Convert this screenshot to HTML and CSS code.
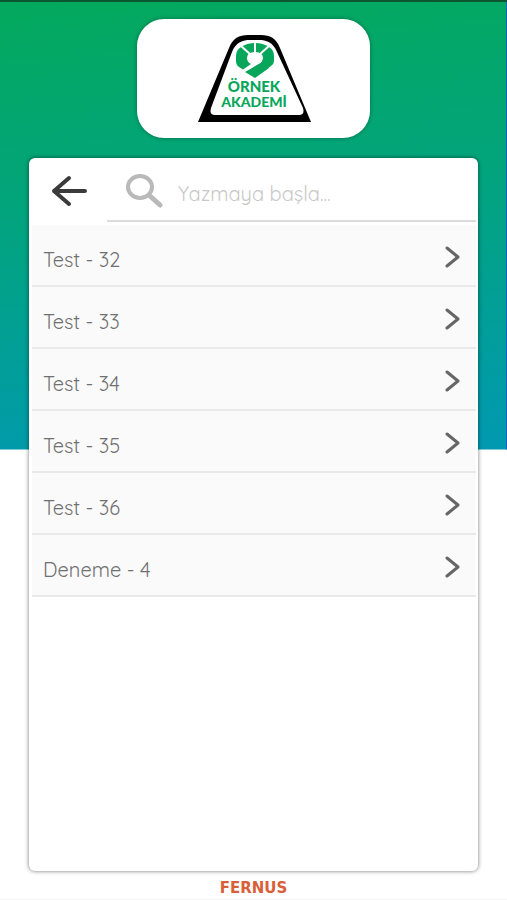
FILE: index.html
```html
<!DOCTYPE html>
<html lang="tr">
<head>
<meta charset="utf-8">
<meta name="viewport" content="width=device-width, initial-scale=1">
<title>Örnek Akademi</title>
<link rel="stylesheet" href="styles.css">
</head>
<body>
<div class="app">
  <header class="brand">
    <svg class="brand-logo" viewBox="0 0 114 90" role="img" aria-label="Örnek Akademi">
      <path d="M1 88 L32 14 C36 4 42 1 51 1 H64 C73 1 79 4 83 14 L114 88Z" fill="#000"/>
      <path d="M35 18 C39 8 46 6 53 6 H62 C69 6 76 8 80 18 L106 74 Q108 81 102 81 H18 Q12 81 14 74Z" fill="#fff"/>
      <path d="M39 22 Q39 16 44 13 Q50 9 58 9 Q66 9 72 13 Q77 16 77 22 V27 Q77 30 74 32 L58 43 L42 33 Q39 31 39 27Z" fill="#07a65b"/>
      <path d="M50 24 Q50 18 58 18 Q66 18 66 24 Q66 28 62 30 L57 33 L47 41 L44 37 L54 30 Q50 28 50 24Z" fill="#fff"/>
      <path d="M66 24 Q66 28 62 30 L48 38 L58 44 L72 34 V24Z" fill="#07a65b"/>
      <path d="M58 8 V20 M43 11 L54 21 M73 11 L62 21" fill="none" stroke="#fff" stroke-width="2"/>
      <text class="logo-text logo-top" x="57" y="58" text-anchor="middle">ÖRNEK</text>
      <text class="logo-text" x="57" y="73" text-anchor="middle">AKADEMİ</text>
    </svg>
  </header>
  <main class="panel">
    <form class="search">
      <button class="back" type="button" aria-label="Geri">
        <svg width="38" height="32" viewBox="0 0 38 32"><path d="M18 3 L3 16 L18 29 M3 16 H34" fill="none" stroke="#3b3b3b" stroke-width="4" stroke-linecap="round" stroke-linejoin="round"/></svg>
      </button>
      <label class="field">
        <svg width="38" height="34" viewBox="0 0 38 34" aria-hidden="true"><ellipse cx="15" cy="13" rx="12" ry="11" fill="none" stroke="#b9b9b9" stroke-width="4"/><path d="M25 22 L35 31" stroke="#b9b9b9" stroke-width="5" stroke-linecap="round"/></svg>
        <input type="text" placeholder="Yazmaya başla..." aria-label="Ara">
      </label>
    </form>
    <nav class="list">
      <a class="row" href="#">Test - 32<svg class="chevron" viewBox="0 0 16 22"><path d="M2 2 L13 11 L2 20"/></svg></a>
      <a class="row" href="#">Test - 33<svg class="chevron" viewBox="0 0 16 22"><path d="M2 2 L13 11 L2 20"/></svg></a>
      <a class="row" href="#">Test - 34<svg class="chevron" viewBox="0 0 16 22"><path d="M2 2 L13 11 L2 20"/></svg></a>
      <a class="row" href="#">Test - 35<svg class="chevron" viewBox="0 0 16 22"><path d="M2 2 L13 11 L2 20"/></svg></a>
      <a class="row" href="#">Test - 36<svg class="chevron" viewBox="0 0 16 22"><path d="M2 2 L13 11 L2 20"/></svg></a>
      <a class="row" href="#">Deneme - 4<svg class="chevron" viewBox="0 0 16 22"><path d="M2 2 L13 11 L2 20"/></svg></a>
    </nav>
  </main>
  <footer class="maker">FERNUS</footer>
</div>
</body>
</html>
```
FILE: styles.css
```css
* { box-sizing: border-box; }

body {
  margin: 0;
  background: #fff;
  font-family: Quicksand, Inter, sans-serif;
}

.app {
  display: flex;
  flex-direction: column;
  min-height: 100vh;
  padding: 17px 29px 0;
  border-top: 2px solid #0b5730;
  border-bottom: 1px solid #f3f3f3;
  background:
    linear-gradient(#1565c0, #1565c0) right top / 1px calc(50% - 1px) no-repeat,
    linear-gradient(175deg, #04a95d 0%, #02a47c 42%, #0099b1 100%) left top / 100% calc(50% - 1px) no-repeat;
}

.brand {
  display: flex;
  align-items: center;
  justify-content: center;
  align-self: center;
  width: 52%;
  height: 119px;
  margin-bottom: 20px;
  border-radius: 27px;
  background: #fff;
  box-shadow: 0 0 4px rgba(0, 0, 0, 0.35);
}

.brand-logo { width: 114px; height: 90px; }

.logo-text {
  fill: #07a65b;
  font-family: Lato, sans-serif;
  font-size: 14px;
  font-weight: 900;
}

.logo-top { font-size: 15px; }

.panel {
  flex: 1;
  padding: 4px 2px 3px 3px;
  border-radius: 6px;
  background: #fff;
  box-shadow: 0 0 4px rgba(0, 0, 0, 0.55);
}

.search {
  display: flex;
  height: 63px;
}

.back {
  display: flex;
  flex: none;
  align-items: center;
  justify-content: center;
  width: 75px;
  height: 58px;
  padding: 0;
  border: 0;
  background: none;
}

.field {
  display: flex;
  flex: 1;
  align-items: center;
  gap: 15px;
  height: 60px;
  padding-left: 18px;
  border-bottom: 2px solid #dcdcdc;
}

.field svg { flex: none; }

.field input {
  flex: 1;
  min-width: 0;
  padding: 4px 0 0;
  border: 0;
  outline: 0;
  background: none;
  color: #636363;
  font: inherit;
  font-size: 20px;
  font-weight: 400;
}

.field input::placeholder { color: #c8c8c8; opacity: 1; }

.row {
  display: flex;
  align-items: center;
  justify-content: space-between;
  height: 62px;
  padding: 8px 15px 0 11px;
  border-bottom: 2px solid #e9e9e9;
  background: #fafafa;
  color: #707070;
  font-size: 20px;
  font-weight: 400;
  text-decoration: none;
}

.chevron {
  width: 16px;
  height: 22px;
  margin-bottom: 4px;
  fill: none;
  stroke: #666;
  stroke-width: 3;
  stroke-linecap: round;
  stroke-linejoin: round;
}

.maker {
  height: 28px;
  color: #d95f3a;
  font-family: "DejaVu Sans", sans-serif;
  font-size: 15px;
  font-weight: 700;
  line-height: 35px;
  text-align: center;
}
```
